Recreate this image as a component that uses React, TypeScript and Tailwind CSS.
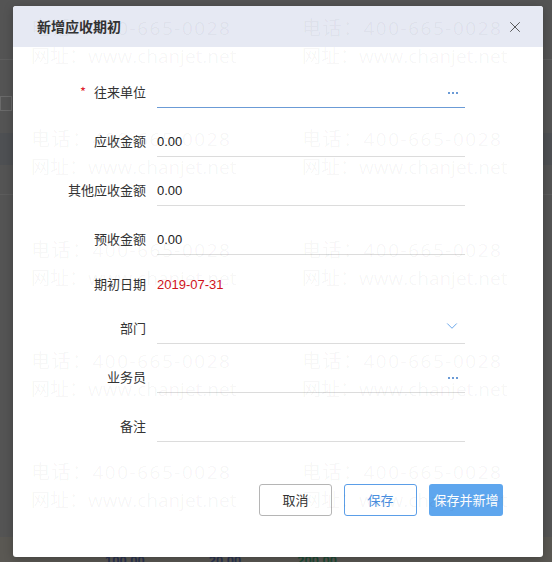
import { X, ChevronDown } from 'lucide-react';

interface FieldRow {
  label: string;
  value?: string;
  required?: boolean;
  kind: 'text' | 'ref' | 'select' | 'date';
  top: string;
  active?: boolean;
}

const ROWS: FieldRow[] = [
  { label: '往来单位', kind: 'ref', required: true, top: 'mt-0', active: true },
  { label: '应收金额', kind: 'text', value: '0.00', top: 'mt-[17px]' },
  { label: '其他应收金额', kind: 'text', value: '0.00', top: 'mt-[17px]' },
  { label: '预收金额', kind: 'text', value: '0.00', top: 'mt-[17px]' },
  { label: '期初日期', kind: 'date', value: '2019-07-31', top: 'mt-[13px]' },
  { label: '部门', kind: 'select', top: 'mt-[12px]' },
  { label: '业务员', kind: 'ref', top: 'mt-[17px]' },
  { label: '备注', kind: 'text', top: 'mt-[17px]' },
];

function Dots() {
  return (
    <div className="flex items-center gap-[2px]">
      <span className="h-[2px] w-[2px] bg-[#6b9bd6]" />
      <span className="h-[2px] w-[2px] bg-[#6b9bd6]" />
      <span className="h-[2px] w-[2px] bg-[#6b9bd6]" />
    </div>
  );
}

function Watermark() {
  const groups = [0, 1, 2, 3, 4];
  return (
    <div className="pointer-events-none absolute inset-0 overflow-hidden rounded-[3px] pt-[8px] font-['Open_Sans','Noto_Sans_CJK_SC',sans-serif] text-[19px] text-black/[0.045]">
      <div className="flex flex-col gap-[55px]">
        {groups.map(g => (
          <div key={g} className="flex pl-[18px]">
            {[0, 1].map(c => (
              <div key={c} className="flex w-[271px] shrink-0 flex-col leading-[28px] whitespace-nowrap">
                <span className="tracking-[1.5px]">电话：400-665-0028</span>
                <span>网址：www.chanjet.net</span>
              </div>
            ))}
          </div>
        ))}
      </div>
    </div>
  );
}

export default function App() {
  return (
    <div className="relative h-[562px] w-[552px] overflow-hidden bg-[#545454] font-['Liberation_Sans','Noto_Sans_CJK_SC',sans-serif]">
      {/* dimmed page behind the dialog */}
      <div className="flex h-full flex-col">
        <div className="h-[60px] border-b border-[#5e5e5e]" />
        <div className="mt-[36px] h-[15px] w-[12px] border border-[#6a6a6a]" />
        <div className="mt-[22px] h-[32px] bg-[#4e5053]" />
        <div className="h-[30px] border-b border-[#5c5c5c]" />
        <div className="flex-1" />
        <div className="flex h-[25px] items-start bg-[#5a5853] pt-[16px] text-[13px] font-bold leading-[16px]">
          <span className="ml-[105px] text-[#2a3350]">100.00</span>
          <span className="ml-[64px] text-[#2a3350]">20.00</span>
          <span className="ml-[56px] text-[#1d4a34]">200.00</span>
        </div>
      </div>

      {/* dialog */}
      <div className="absolute left-[13px] top-[6px] flex h-[551px] w-[530px] flex-col rounded-[3px] bg-white shadow-[0_2px_10px_rgba(0,0,0,0.25)]">
        <div className="flex h-[41px] items-center justify-between rounded-t-[3px] bg-[#e6e9f3] pl-[24px] pr-[19px]">
          <span className="font-['Noto_Sans_CJK_SC',sans-serif] text-[14px] font-bold text-[#333]">新增应收期初</span>
          <X className="h-[18px] w-[18px] text-[#4a4a4a]" strokeWidth={1.2} />
        </div>

        <div className="flex flex-col pt-[29px]">
          {ROWS.map(row => (
            <div key={row.label} className={`flex h-[32px] items-stretch ${row.top}`}>
              <div className="flex w-[133px] items-center justify-end font-['Noto_Sans_CJK_SC',sans-serif] text-[13px] text-[#333]">
                {row.required && <span className="mr-[8px] text-[#e0202c]">*</span>}
                {row.label}
              </div>
              <div
                className={`ml-[11px] flex w-[308px] items-center justify-between pr-[7px] pt-[2px] text-[13px] ${
                  row.kind === 'date'
                    ? ''
                    : row.active
                      ? 'border-b border-[#6b9bd6]'
                      : 'border-b border-[#dcdcdc]'
                }`}
              >
                <span className={row.kind === 'date' ? 'text-[#d0121b]' : 'text-[#222]'}>{row.value ?? ''}</span>
                {row.kind === 'ref' && <Dots />}
                {row.kind === 'select' && (
                  <ChevronDown className="-mt-[6px] -mr-[3px] h-[18px] w-[18px] text-[#5b9ee8]" strokeWidth={1.2} />
                )}
              </div>
            </div>
          ))}
        </div>

        <div className="mt-[42px] flex justify-end gap-[12px] pr-[40px] font-['Noto_Sans_CJK_SC',sans-serif] text-[13px]">
          <button className="h-[32px] w-[73px] rounded-[3px] border border-[#b5b5b5] bg-white text-[#333]">取消</button>
          <button className="h-[32px] w-[73px] rounded-[3px] border border-[#5b9ee8] bg-white text-[#4a8fdf]">保存</button>
          <button className="h-[32px] w-[74px] rounded-[3px] bg-[#5ea6ee] text-white">保存并新增</button>
        </div>

        <Watermark />
      </div>
    </div>
  );
}
